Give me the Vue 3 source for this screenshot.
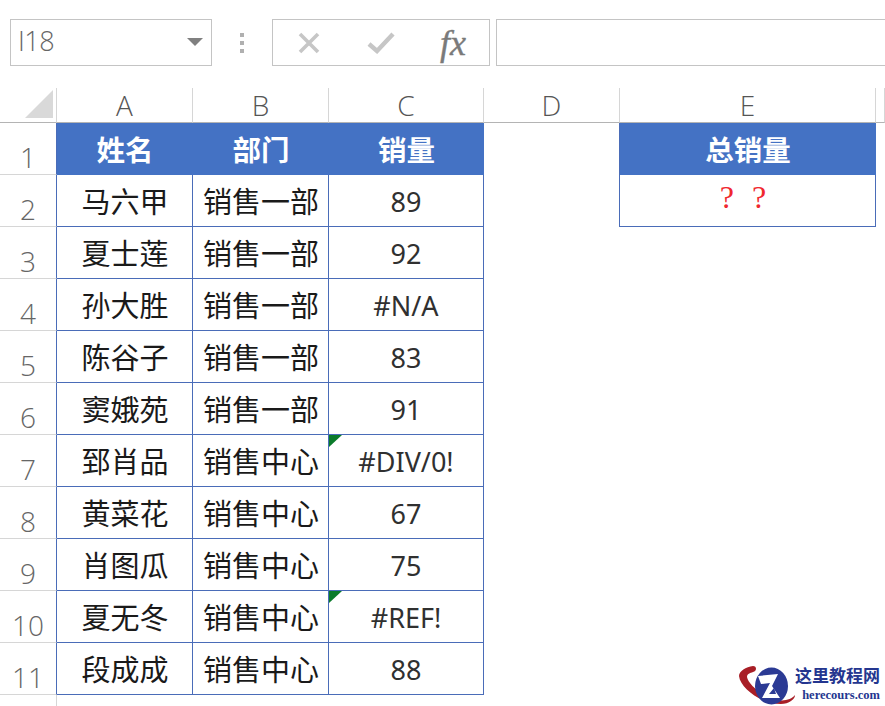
<script setup>
const rows = [
  ['马六甲', '销售一部', '89'],
  ['夏士莲', '销售一部', '92'],
  ['孙大胜', '销售一部', '#N/A'],
  ['陈谷子', '销售一部', '83'],
  ['窦娥苑', '销售一部', '91'],
  ['郅肖品', '销售中心', '#DIV/0!', true],
  ['黄菜花', '销售中心', '67'],
  ['肖图瓜', '销售中心', '75'],
  ['夏无冬', '销售中心', '#REF!', true],
  ['段成成', '销售中心', '88']
]
const cols = ['A', 'B', 'C', 'D', 'E']
</script>

<template>
  <div class="app">
    <div class="bar">
      <div class="namebox">
        <span class="namevalue">I18</span>
        <i class="caret"></i>
      </div>
      <div class="dots"><i></i><i></i><i></i></div>
      <div class="fxbox">
        <svg width="24" height="22" viewBox="0 0 24 22"><path d="M3 2 L21 20 M21 2 L3 20" stroke="#c6c6c6" stroke-width="3.6" fill="none"/></svg>
        <svg width="28" height="22" viewBox="0 0 28 22"><path d="M2 12 L10 19 L26 2" stroke="#c6c6c6" stroke-width="4.4" fill="none"/></svg>
        <span class="fx">fx</span>
      </div>
      <div class="formula"></div>
    </div>

    <div class="sheet">
      <div class="head corner"><i></i></div>
      <div v-for="c in cols" :key="c" class="head">{{ c }}</div>
      <div class="head"></div>

      <div class="rownum">1</div>
      <div class="cell title">姓名</div>
      <div class="cell title">部门</div>
      <div class="cell title">销量</div>
      <div class="cell blank edge"></div>
      <div class="cell title">总销量</div>
      <div class="cell blank"></div>

      <template v-for="(r, i) in rows" :key="i">
        <div class="rownum">{{ i + 2 }}</div>
        <div class="cell data">{{ r[0] }}</div>
        <div class="cell data">{{ r[1] }}</div>
        <div class="cell data num">
          <i v-if="r[3]" class="flag"></i>{{ r[2] }}
        </div>
        <div class="cell blank" :class="{ edge: i === 0 }"></div>
        <div v-if="i === 0" class="cell data ask"><span>?</span><span>?</span></div>
        <div v-else class="cell blank"></div>
        <div class="cell blank"></div>
      </template>

      <div class="rest"></div>
    </div>

    <div class="logo">
      <svg width="60" height="42" viewBox="0 0 60 42">
        <path d="M14 1 C7 2 0 6 0 11 C1 20 12 30 24 35 C34 39 46 41 52 36 C55 34 56 32 56 30 C52 35 44 37 34 34 C22 30 9 19 8 12 C8 9 11 8 14 7 C18 6 18 1 14 1 Z" fill="#a81e26"/>
        <ellipse cx="32.5" cy="21" rx="16.5" ry="18.5" fill="#2b3a94"/>
        <path d="M19 11 L39 9 L33 21 L41 33 L23 33 L31 18 L22 19 Z" fill="#fff"/>
        <path d="M30 29 L35 23 L37 29 Z" fill="#2b3a94"/>
      </svg>
      <div class="logotext">
        <div class="logocn">这里教程网</div>
        <div class="logoen">herecours.com</div>
      </div>
    </div>
  </div>
</template>

<style scoped>
.app {
  position: relative;
  width: 885px;
  height: 706px;
  overflow: hidden;
  background: #fff;
  font-family: "Open Sans", "Noto Sans CJK SC", sans-serif;
}
.bar {
  display: flex;
  align-items: stretch;
  height: 47px;
  padding: 19px 0 22px 10px;
}
.namebox {
  width: 202px;
  box-sizing: border-box;
  border: 1px solid #c4c4c4;
  display: flex;
  align-items: center;
  justify-content: space-between;
  padding: 0 8px 4px 7px;
  font-size: 27px;
  font-weight: 300;
  color: #666;
}
.namevalue {
  letter-spacing: -0.5px;
}
.caret {
  width: 0;
  height: 0;
  margin-top: 2px;
  border-left: 8px solid transparent;
  border-right: 8px solid transparent;
  border-top: 8px solid #808080;
}
.dots {
  width: 60px;
  display: flex;
  flex-direction: column;
  align-items: center;
  justify-content: center;
  gap: 4px;
}
.dots i {
  width: 4px;
  height: 4px;
  background: #b0b0b0;
}
.fxbox {
  width: 218px;
  box-sizing: border-box;
  border: 1px solid #c4c4c4;
  display: flex;
  align-items: center;
  padding-left: 24px;
  margin-right: 6px;
}
.fxbox svg:nth-child(2) {
  margin-left: 46px;
}
.fx {
  margin-left: 45px;
  font-family: "Liberation Serif", serif;
  font-style: italic;
  font-weight: 400;
  font-size: 36px;
  color: #7a7a7a;
  line-height: 1;
  -webkit-text-stroke: 0.4px #7a7a7a;
}
.formula {
  flex: 1;
  border: 1px solid #c4c4c4;
  border-right: none;
}
.sheet {
  display: grid;
  grid-template-columns: 57px 136px 136px 155px 136px 256px 1fr;
  grid-template-rows: 35px repeat(11, 52px) 11px;
}
.head {
  box-sizing: border-box;
  border-right: 1px solid #d6d6d6;
  border-bottom: 1px solid #b4b4b4;
  display: flex;
  align-items: flex-end;
  justify-content: center;
  font-size: 28px;
  font-weight: 300;
  line-height: 34px;
  color: #555;
}
.head:last-of-type {
  border-right: none;
}
.corner {
  position: relative;
}
.corner i {
  position: absolute;
  left: 25px;
  top: 2px;
  border-left: 28px solid transparent;
  border-bottom: 28px solid #d9d9d9;
}
.rownum {
  box-sizing: border-box;
  border-right: 1px solid #4a6cb8;
  border-bottom: 1px solid #d6d6d6;
  display: flex;
  align-items: flex-end;
  justify-content: center;
  font-size: 28px;
  font-weight: 300;
  line-height: 33px;
  color: #666;
}
.cell {
  box-sizing: border-box;
  position: relative;
  display: flex;
  align-items: center;
  justify-content: center;
}
.title {
  background: #4472c4;
  color: #fff;
  font-family: "Noto Sans CJK SC", sans-serif;
  font-weight: 700;
  font-size: 28.5px;
  line-height: 1;
}
.data {
  border-right: 1px solid #4a6cb8;
  border-bottom: 1px solid #4a6cb8;
  font-family: "Noto Sans CJK SC", sans-serif;
  font-size: 29px;
  line-height: 1;
  color: #1a1a1a;
  padding-left: 1px;
}
.num {
  font-family: "Noto Sans", sans-serif;
  font-size: 27px;
  color: #303030;
  padding: 2px 0 0;
}
.edge {
  border-right: 1px solid #4a6cb8;
}
.flag {
  position: absolute;
  left: 0;
  top: 0;
  border-top: 12px solid #0b7b2b;
  border-right: 13px solid transparent;
}
.ask {
  align-items: flex-start;
  gap: 18px;
  padding: 6px 9px 0 0;
  font-family: "Liberation Serif", serif;
  font-size: 32px;
  color: #f0282f;
}
.rest {
  grid-column: 1;
  box-sizing: border-box;
  border-right: 1px solid #d6d6d6;
}
.logo {
  position: absolute;
  left: 739px;
  top: 665px;
  display: flex;
}
.logotext {
  margin-left: -4px;
  font-family: "Liberation Serif", serif;
  font-weight: 700;
  color: #24368f;
  text-align: right;
}
.logocn {
  font-family: "Noto Sans CJK SC", sans-serif;
  font-size: 17px;
  line-height: 20px;
  white-space: nowrap;
}
.logoen {
  font-size: 12.5px;
  line-height: 15px;
  margin-top: 3px;
  white-space: nowrap;
}
</style>
